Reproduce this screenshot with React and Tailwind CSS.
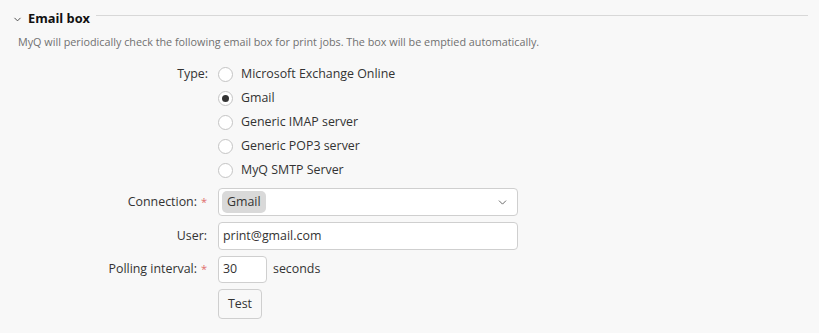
import { ChevronDown } from 'lucide-react'

const TYPES = ['Microsoft Exchange Online', 'Gmail', 'Generic IMAP server', 'Generic POP3 server', 'MyQ SMTP Server']

function Radio({ label, checked }) {
  return (
    <label className="flex h-6 items-center gap-2">
      <span className="flex h-[15px] w-[15px] items-center justify-center rounded-full border border-[#c4c4c4] bg-white">
        {checked && <span className="h-[7px] w-[7px] rounded-full bg-[#333]" />}
      </span>
      <span>{label}</span>
    </label>
  )
}

function Label({ children, required }) {
  return (
    <div className="flex items-center justify-end gap-1 pr-[1px]">
      <span>{children}</span>
      {required && <span className="text-[11px] text-[#e06c6c]">*</span>}
    </div>
  )
}

export default function App() {
  return (
    <div className="h-[333px] w-[819px] bg-[#f8f8f8] pt-[8px] font-['Open_Sans',sans-serif] text-[12.4px] text-[#333]">
      {/* Section header */}
      <div className="flex h-[22px] items-center pl-[12px] pr-[11px]">
        <ChevronDown className="h-[11px] w-[11px] text-[#444]" strokeWidth={2} />
        <h2 className="ml-[5px] text-[12.8px] font-bold text-[#111]">Email box</h2>
        <div className="ml-[6px] mb-[7px] h-px flex-1 bg-[#d8d8d8]" />
      </div>
      <p className="mt-[4px] pl-[18px] text-[10.8px] leading-[16px] text-[#707070]">
        MyQ will periodically check the following email box for print jobs. The box will be emptied automatically.
      </p>

      <div className="mt-[12px] grid grid-cols-[208px_300px] gap-x-[10px]">
        <div className="flex h-6 items-center justify-end">Type:</div>
        <div>
          {TYPES.map(t => <Radio key={t} label={t} checked={t === 'Gmail'} />)}
        </div>
      </div>

      <div className="mt-[6px] grid grid-cols-[208px_300px] gap-x-[10px] gap-y-[6px]">
        <Label required>Connection:</Label>
        <div className="flex h-[28px] items-center justify-between rounded-[4px] border border-[#cfcfcf] bg-white pl-[3px] pr-[8px]">
          <span className="rounded-[5px] bg-[#d9d9d9] px-[5px] py-[2px]">Gmail</span>
          <ChevronDown className="h-[13px] w-[13px] text-[#555]" strokeWidth={1.6} />
        </div>

        <Label>User:</Label>
        <div className="flex h-[28px] items-center rounded-[4px] border border-[#cfcfcf] bg-white px-[4px]">
          print@gmail.com
        </div>

        <Label required>Polling interval:</Label>
        <div className="flex items-center gap-[6px]">
          <div className="flex h-[27px] w-[49px] items-center rounded-[4px] border border-[#cfcfcf] bg-white px-[4px]">30</div>
          <span>seconds</span>
        </div>

        <div />
        <div>
          <button className="h-[30px] w-[44px] rounded-[4px] border border-[#cfcfcf] bg-[#f8f8f8] text-[#333]">Test</button>
        </div>
      </div>
    </div>
  )
}
